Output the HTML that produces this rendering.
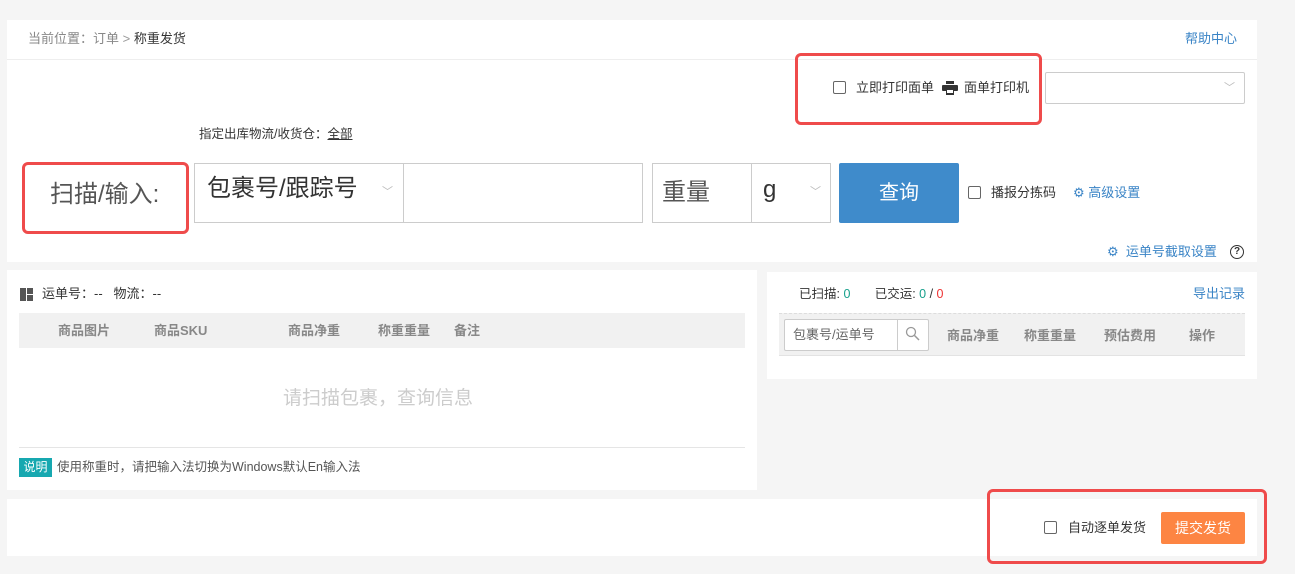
<!DOCTYPE html>
<html><head><meta charset="utf-8"><style>
*{margin:0;padding:0;box-sizing:border-box}
body{width:1295px;height:574px;background:#f5f5f5;font-family:"Liberation Sans","Noto Sans CJK SC",sans-serif;font-size:13px;line-height:16px;color:#333;position:relative;overflow:hidden}
.a{position:absolute}
.card{position:absolute;background:#fff}
.cb{position:absolute;width:13px;height:13px;border:1px solid #666;border-radius:2px;background:#fff}
.red{position:absolute;border:3px solid #ef4b4b;border-radius:6px}
.blue{color:#3a84c6}
.big{font-size:24px;line-height:28px}
</style></head><body>
<div class="card" style="left:7px;top:20px;width:1250px;height:242px"></div>
<div class="a" style="left:7px;top:59px;width:1250px;height:1px;background:#eee"></div>
<div class="a" style="left:28px;top:31px;color:#888">当前位置：订单 <span style="color:#999">&gt;</span> <span style="color:#333">称重发货</span></div>
<div class="a blue" style="left:1185px;top:31px">帮助中心</div>
<div class="cb" style="left:833px;top:81px"></div>
<div class="a" style="left:856px;top:80px">立即打印面单</div>
<svg class="a" style="left:942px;top:81px" width="16" height="14" viewBox="0 0 16 14"><rect x="4" y="0" width="8" height="3" fill="#333"/><rect x="0" y="4" width="16" height="6" rx="1" fill="#333"/><rect x="4" y="8" width="8" height="6" fill="#333"/><rect x="5" y="9" width="6" height="3" fill="#fff"/></svg>
<div class="a" style="left:964px;top:80px">面单打印机</div>
<div class="a" style="left:1045px;top:72px;width:200px;height:32px;border:1px solid #ccc;border-radius:2px"></div>
<div class="a" style="left:1224px;top:80px;color:#bbb;font-size:11px">﹀</div>
<div class="red" style="left:795px;top:53px;width:247px;height:72px"></div>
<div class="a" style="left:199px;top:126px;font-size:12.5px">指定出库物流/收货仓：<u>全部</u></div>
<div class="a big" style="left:50px;top:181px;color:#555">扫描/输入:</div>
<div class="red" style="left:22px;top:162px;width:167px;height:72px"></div>
<div class="a" style="left:194px;top:163px;width:449px;height:60px;border:1px solid #ccc"></div>
<div class="a" style="left:403px;top:163px;width:1px;height:60px;background:#ccc"></div>
<div class="a big" style="left:207px;top:175px;color:#333">包裹号/跟踪号</div>
<div class="a" style="left:382px;top:184px;color:#bbb;font-size:11px">﹀</div>
<div class="a" style="left:652px;top:163px;width:179px;height:60px;border:1px solid #ccc"></div>
<div class="a" style="left:751px;top:163px;width:1px;height:60px;background:#ccc"></div>
<div class="a big" style="left:662px;top:179px;color:#555">重量</div>
<div class="a big" style="left:763px;top:176px;color:#333">g</div>
<div class="a" style="left:810px;top:184px;color:#bbb;font-size:11px">﹀</div>
<div class="a" style="left:839px;top:163px;width:120px;height:60px;background:#3f8bcb;border-radius:2px;color:#fff;font-size:20px;text-align:center;line-height:60px">查询</div>
<div class="cb" style="left:968px;top:186px"></div>
<div class="a" style="left:991px;top:185px">播报分拣码</div>
<div class="a blue" style="left:1073px;top:185px">⚙ 高级设置</div>
<div class="a blue" style="left:1107px;top:244px">⚙ &nbsp;运单号截取设置</div>
<div class="a" style="left:1230px;top:245px;width:14px;height:14px;border:1.5px solid #333;border-radius:50%;font-size:10px;text-align:center;line-height:11px;font-weight:bold">?</div>

<div class="card" style="left:7px;top:270px;width:750px;height:220px"></div>
<svg class="a" style="left:20px;top:288px" width="13" height="13"><rect x="0" y="0" width="6" height="13" fill="#555"/><rect x="7" y="0" width="6" height="6" fill="#555"/><rect x="7" y="7" width="6" height="6" fill="#555"/></svg>
<div class="a" style="left:42px;top:286px">运单号：--&nbsp;&nbsp;&nbsp;物流：--</div>
<div class="a" style="left:19px;top:313px;width:726px;height:35px;background:#f1f1f1"></div>
<div class="a" style="left:58px;top:323px;color:#888;font-weight:bold">商品图片</div>
<div class="a" style="left:154px;top:323px;color:#888;font-weight:bold">商品SKU</div>
<div class="a" style="left:288px;top:323px;color:#888;font-weight:bold">商品净重</div>
<div class="a" style="left:378px;top:323px;color:#888;font-weight:bold">称重重量</div>
<div class="a" style="left:454px;top:323px;color:#888;font-weight:bold">备注</div>
<div class="a" style="left:283px;top:388px;font-size:19px;line-height:22px;color:#ccc">请扫描包裹，查询信息</div>
<div class="a" style="left:19px;top:447px;width:726px;height:1px;background:#e5e5e5"></div>
<div class="a" style="left:19px;top:458px;width:33px;height:19px;background:#17a8b0;color:#fff;font-size:12px;text-align:center;line-height:19px">说明</div>
<div class="a" style="left:57px;top:459px;color:#555;font-size:12.5px">使用称重时，请把输入法切换为Windows默认En输入法</div>

<div class="card" style="left:767px;top:272px;width:490px;height:107px"></div>
<div class="a" style="left:799px;top:286px;font-size:12.5px">已扫描: <span style="color:#17a08c">0</span>&nbsp;&nbsp;&nbsp;&nbsp;&nbsp;&nbsp;&nbsp;已交运: <span style="color:#17a08c">0</span> / <span style="color:#e33">0</span></div>
<div class="a blue" style="left:1193px;top:286px">导出记录</div>
<div class="a" style="left:779px;top:313px;width:466px;height:43px;background:#f1f1f1;border-top:1px dashed #ddd;border-bottom:1px solid #e3e3e3"></div>
<div class="a" style="left:784px;top:319px;width:145px;height:32px;border:1px solid #ccc;background:#fff;border-radius:2px"></div>
<div class="a" style="left:897px;top:319px;width:1px;height:32px;background:#ccc"></div>
<div class="a" style="left:793px;top:327px;color:#666">包裹号/运单号</div>
<svg class="a" style="left:905px;top:326px" width="15" height="15"><circle cx="6" cy="6" r="4.5" stroke="#999" stroke-width="1.3" fill="none"/><line x1="9.5" y1="9.5" x2="14" y2="14" stroke="#999" stroke-width="1.5"/></svg>
<div class="a" style="left:947px;top:328px;color:#888;font-weight:bold">商品净重</div>
<div class="a" style="left:1024px;top:328px;color:#888;font-weight:bold">称重重量</div>
<div class="a" style="left:1104px;top:328px;color:#888;font-weight:bold">预估费用</div>
<div class="a" style="left:1189px;top:328px;color:#888;font-weight:bold">操作</div>

<div class="card" style="left:7px;top:499px;width:1250px;height:57px"></div>
<div class="cb" style="left:1044px;top:521px"></div>
<div class="a" style="left:1068px;top:520px">自动逐单发货</div>
<div class="a" style="left:1161px;top:512px;width:84px;height:32px;background:#fd8543;color:#fff;font-size:14px;text-align:center;line-height:32px;border-radius:2px">提交发货</div>
<div class="red" style="left:987px;top:489px;width:280px;height:75px"></div>
</body></html>
